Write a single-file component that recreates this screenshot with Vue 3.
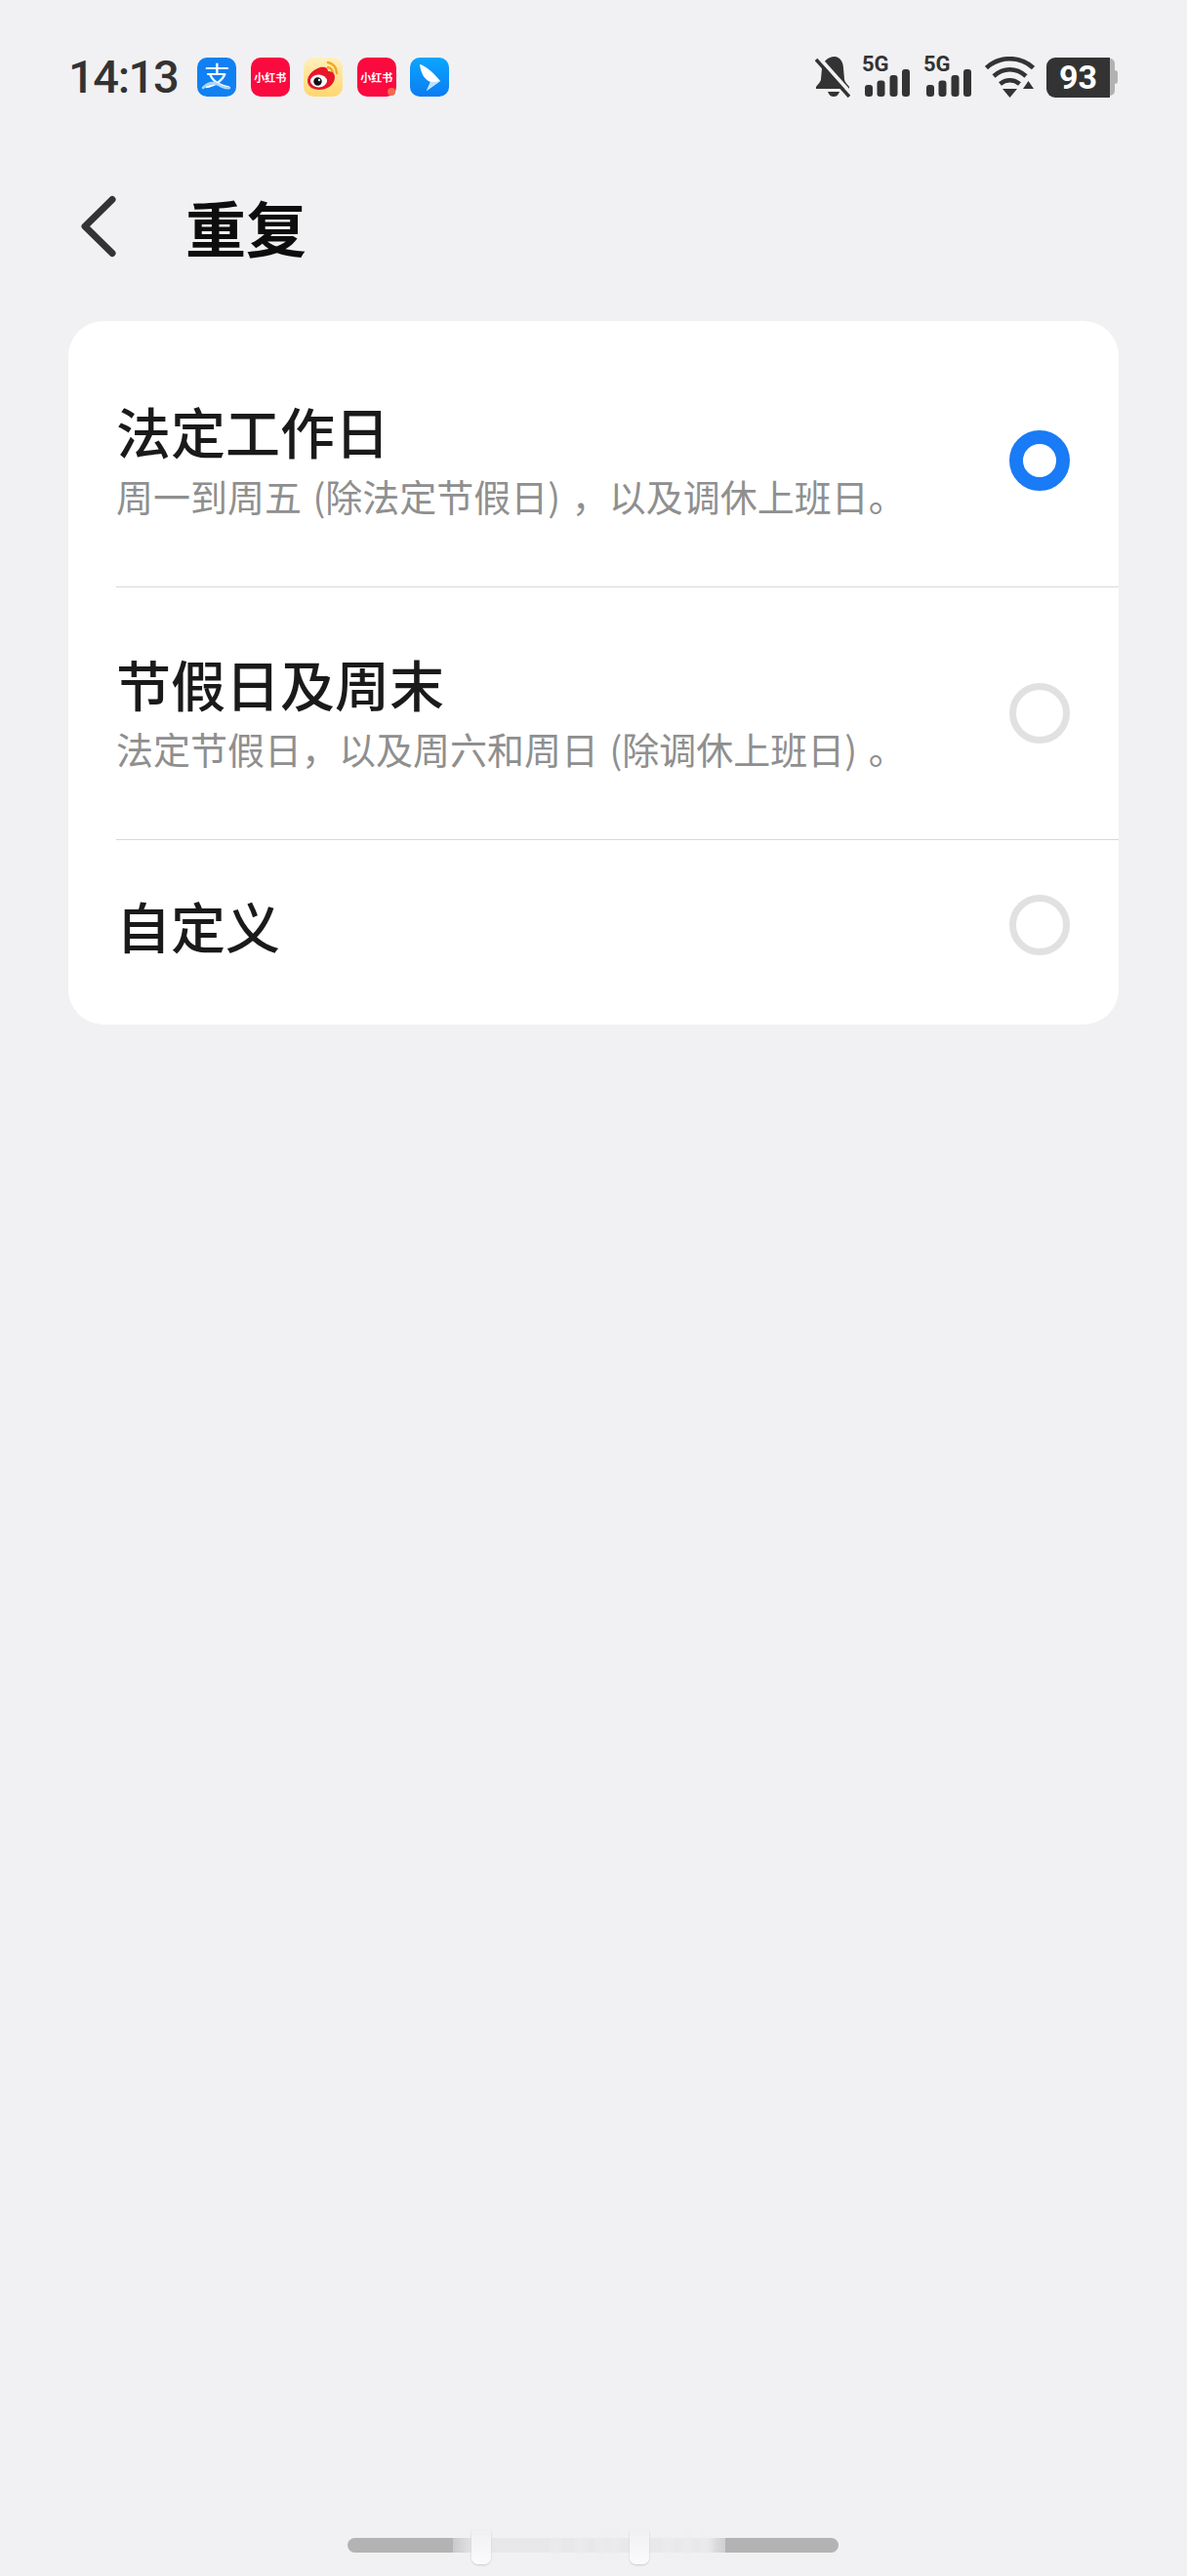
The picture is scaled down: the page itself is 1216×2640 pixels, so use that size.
<script setup>
const options = [
  { title: '法定工作日', sub: '周一到周五 (除法定节假日) ，以及调休上班日。', on: true },
  { title: '节假日及周末', sub: '法定节假日，以及周六和周日 (除调休上班日) 。', on: false },
  { title: '自定义', sub: '', on: false },
]
const bars = [
  { x: 3, y: 29, h: 12 },
  { x: 15.5, y: 24.5, h: 16.5 },
  { x: 28.5, y: 19, h: 22 },
  { x: 41, y: 13, h: 28 },
]
const smudges = [565, 590, 612, 625, 680, 700, 720]
</script>

<template>
  <div class="page">
    <div class="status">
      <div class="status-left">
        <span class="time">14:13</span>
        <div class="apps">
          <div class="app alipay">
            <span class="zhi">支</span>
            <svg class="zhi-tail" viewBox="0 0 40 40"><path d="M6 31c5-5 11-6 16-3 3 2 7 4 11 3" fill="none" stroke="#a9d8ff" stroke-width="2.500" stroke-linecap="round" /></svg>
          </div>
          <div class="app red"><span>小红书</span></div>
          <div class="app weibo">
            <svg viewBox="0 0 40 40" width="40" height="40">
              <path d="M25 5c5 1 9 5 9 11M25 10c3 .5 4.500 2.500 5 6" fill="none" stroke="#f5a623" stroke-width="2.500" stroke-linecap="round" />
              <path d="M4 24c0-6 6-12 13-14 4-1 8 0 8 4 4 0 7 2 7 6 0 7-7 13-16 13-7 0-12-4-12-9z" fill="#e8172c" />
              <ellipse cx="15.500" cy="24" rx="8.500" ry="6.500" fill="#fff" />
              <circle cx="14.500" cy="24.500" r="4.200" fill="#111" />
              <circle cx="16" cy="23" r="1.200" fill="#fff" />
            </svg>
          </div>
          <div class="app red">
            <span>小红书</span>
            <i class="corner"></i>
          </div>
          <div class="app wing">
            <svg viewBox="0 0 40 40" width="40" height="40">
              <path d="M10 7c5 1 13 7 21 17L17 34l4-9C15 23 11 16 10 7z" fill="#fff" />
              <path d="M21 25c3 0 6 0 10-1L17 34z" fill="#bfe3ff" />
            </svg>
          </div>
        </div>
      </div>
      <div class="status-right">
        <svg class="bell" viewBox="0 0 36 42" width="36" height="42">
          <path d="M20 0c-7 0-12 5-13 12l-1 11c0 3-3 5-5 8v2h34v-2c-2-3-5-5-5-8l-1-11C29 5 25 0 20 0z" fill="#333" />
          <path d="M13 36h12c-1 3-3 5-6 5s-5-2-6-5z" fill="#333" />
          <path d="M3 0l34 38" stroke="#f1f1f4" stroke-width="4" />
          <path d="M1 3l34 38" stroke="#333" stroke-width="3.500" />
        </svg>
        <svg v-for="n in 2" :key="n" class="signal" viewBox="0 0 50 42" width="50" height="42">
          <text x="0" y="15" class="five-g">5G</text>
          <rect v-for="b in bars" :key="b.x" :x="b.x" :y="b.y" width="8" :height="b.h" rx="3" fill="#333" />
        </svg>
        <svg class="wifi" viewBox="0 0 51 42" width="51" height="42">
          <path d="M1.500 11.500C15 -1 36 -1 49.500 11.500M9 20c10-9 23-9 33 0M15.500 28c6-5 14-5 20 0" fill="none" stroke="#333" stroke-width="4.500" />
          <path d="M18 33h15l-7.500 9zM39 33h11l-5.500-8z" fill="#333" />
        </svg>
        <div class="battery">
          <div class="battery-body">93</div>
          <div class="battery-rest"></div>
          <div class="battery-nub"></div>
        </div>
      </div>
    </div>

    <div class="header">
      <svg class="back" viewBox="0 0 40 64" width="40" height="64">
        <path d="M34 4.500 6 32l28 27.500" fill="none" stroke="#333" stroke-width="7" stroke-linecap="round" stroke-linejoin="round" />
      </svg>
      <h1>重复</h1>
    </div>

    <div class="card">
      <template v-for="(o, i) in options" :key="o.title">
        <div v-if="i" class="divider"></div>
        <div class="row" :class="{ last: !o.sub }">
          <div class="texts" :class="{ double: o.sub }">
            <div class="title">{{ o.title }}</div>
            <div v-if="o.sub" class="sub">{{ o.sub }}</div>
          </div>
          <span class="radio" :class="{ on: o.on }"></span>
        </div>
      </template>
    </div>

    <div class="home">
      <div class="home-bar">
        <div class="home-glass"></div>
        <i v-for="s in smudges" :key="s" class="smudge" :style="{ left: s - 356 + 'px' }"></i>
        <i class="peek peek-a"></i>
        <i class="peek peek-b"></i>
      </div>
    </div>
  </div>
</template>

<style scoped>
.page {
  width: 1216px;
  height: 2640px;
  background: #f1f1f4;
  display: flex;
  flex-direction: column;
  overflow: hidden;
  font-family: "Noto Sans CJK SC", "Noto Sans", sans-serif;
}
.status {
  margin-top: 58px;
  height: 42px;
  padding: 0 71px 0 70px;
  display: flex;
  align-items: center;
  justify-content: space-between;
}
.status-left {
  display: flex;
  align-items: center;
  gap: 20px;
}
.time {
  font-family: Roboto, sans-serif;
  font-size: 47px;
  font-weight: 500;
  line-height: 42px;
  color: #333;
  letter-spacing: -1.4px;
}
.apps {
  display: flex;
  gap: 14.500px;
}
.app {
  position: relative;
  width: 40px;
  height: 40px;
  border-radius: 10px;
  display: flex;
  align-items: center;
  justify-content: center;
}
.app svg {
  display: block;
}
.alipay {
  background: #1080f2;
  align-items: flex-start;
}
.zhi {
  color: #fff;
  font-size: 27px;
  font-weight: 400;
  line-height: 30px;
  margin-top: 3px;
}
.zhi-tail {
  position: absolute;
  inset: 0;
}
.red {
  background: #fa0a3e;
  color: #fff;
  font-size: 11px;
  font-weight: 700;
  white-space: nowrap;
}
.corner {
  position: absolute;
  right: 1px;
  bottom: 1px;
  width: 8px;
  height: 8px;
  border-radius: 50%;
  background: #f4694f;
}
.weibo {
  background: linear-gradient(#fff0bd, #ffd76e);
}
.wing {
  background: linear-gradient(#0ba6ff, #0b7cf2);
}
.status-right {
  display: flex;
  align-items: center;
}
.bell {
  margin-right: 12px;
}
.signal {
  margin-right: 13px;
  overflow: visible;
}
.five-g {
  font-family: Roboto, sans-serif;
  font-size: 22px;
  font-weight: 700;
  fill: #333;
}
.wifi {
  margin-right: 12px;
}
.battery {
  display: flex;
  align-items: center;
}
.battery-body {
  width: 65px;
  height: 41px;
  background: #333;
  border-radius: 9px 0 0 9px;
  color: #fff;
  font-family: Roboto, sans-serif;
  font-size: 34px;
  font-weight: 700;
  line-height: 41px;
  text-align: center;
}
.battery-rest {
  width: 5px;
  height: 38px;
  background: #b2b2b2;
  border-radius: 0 5px 5px 0;
}
.battery-nub {
  width: 3px;
  height: 14px;
  background: #b2b2b2;
  border-radius: 0 3px 3px 0;
}
.header {
  margin-top: 92px;
  height: 80px;
  padding-left: 81px;
  display: flex;
  align-items: center;
  gap: 69px;
}
.back {
  flex: none;
}
h1 {
  margin: 0;
  font-size: 62px;
  font-weight: 700;
  line-height: 80px;
  color: #0d0d0d;
}
.card {
  margin: 57px 70px 0;
  padding: 14px 0 15px;
  background: #fff;
  border-radius: 36px;
}
.row {
  height: 258px;
  padding: 0 50px 0 49px;
  display: flex;
  align-items: center;
  justify-content: space-between;
}
.row.last {
  height: 174px;
}
.divider {
  height: 1px;
  margin-left: 49px;
  background: #d8d8d8;
}
.texts.double {
  padding-bottom: 6px;
}
.title {
  font-size: 56px;
  font-weight: 500;
  line-height: 68px;
  color: #1a1a1a;
}
.sub {
  margin-top: 10px;
  font-size: 38px;
  font-weight: 400;
  line-height: 46px;
  color: #8f8f8f;
  word-spacing: 3px;
}
.radio {
  flex: none;
  width: 62px;
  height: 62px;
  box-sizing: border-box;
  border: 7px solid #e1e1e1;
  border-radius: 50%;
}
.radio.on {
  border: 14px solid #1a7bf6;
}
.home {
  margin-top: auto;
  padding: 0 357px 24px 356px;
}
.home-bar {
  position: relative;
  height: 15px;
  border-radius: 8px;
  background: #b3b3b3;
}
.home-glass {
  position: absolute;
  left: 108px;
  width: 279px;
  top: 0;
  bottom: 0;
  background: linear-gradient(90deg, #c9c9ca, #e7e7e9 8%, #e9e9eb 92%, #cfcfd0);
}
.smudge {
  position: absolute;
  top: -8px;
  width: 9px;
  height: 34px;
  background: #eeeef0;
  opacity: 0.6;
  filter: blur(3px);
}
.peek {
  position: absolute;
  top: -8px;
  width: 20px;
  height: 35px;
  background: linear-gradient(#f0f0f2, #fbfbfc);
  border-radius: 0 0 7px 7px;
  box-shadow: 0 1px 2px #c9c9cb;
}
.peek-a {
  left: 127px;
}
.peek-b {
  left: 289px;
}
</style>

<style>
html,
body {
  margin: 0;
  background: #f1f1f4;
}
</style>
